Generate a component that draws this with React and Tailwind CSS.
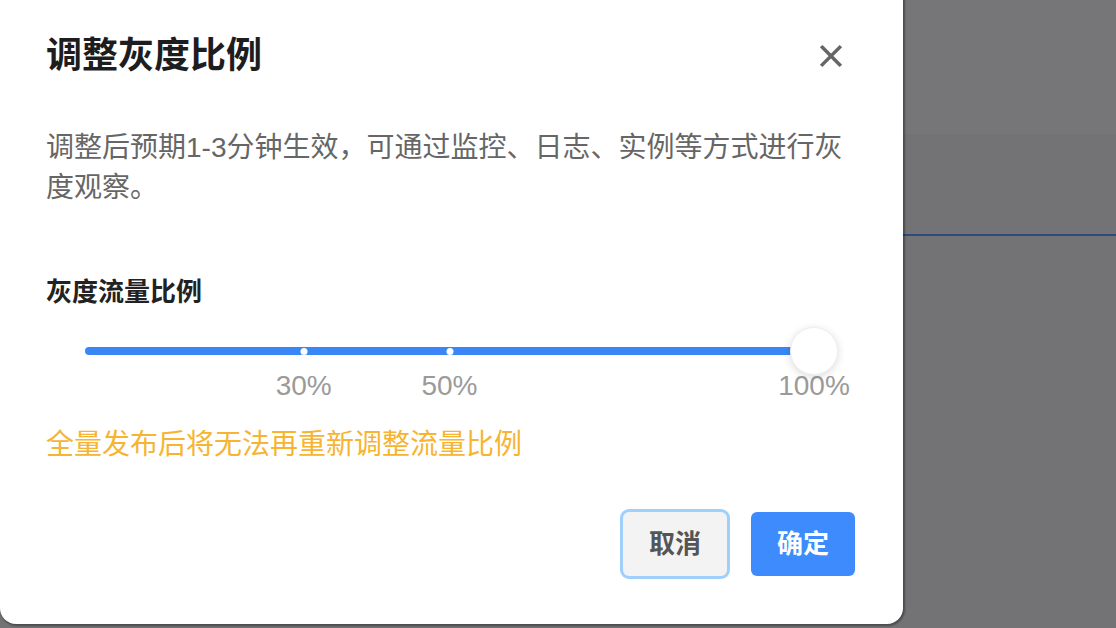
import React from 'react';

const font = { fontFamily: '"Liberation Sans", "Noto Sans CJK SC", sans-serif' };

const marks = [
  { value: 30, label: '30%' },
  { value: 50, label: '50%' },
];

const GraySlider = ({ value }) => (
  <div className="relative h-[84px] pl-[39px] pr-[41px]">
    <div className="relative h-full">
      {/* track */}
      <div className="absolute left-0 right-0 top-[20px] h-[8px] rounded-full bg-[#3b86f7]"></div>
      {marks.map((m) => (
        <div key={m.value}>
          <div
            className="absolute top-[21px] h-[7px] w-[7px] -translate-x-1/2 rounded-full bg-white"
            style={{ left: `${m.value}%` }}
          ></div>
          <div
            className="absolute top-[44px] -translate-x-1/2 text-[28px] leading-[30px] text-[#9a9a9a]"
            style={{ left: `${m.value}%` }}
          >
            {m.label}
          </div>
        </div>
      ))}
      <div className="absolute left-full top-[44px] -translate-x-1/2 text-[28px] leading-[30px] text-[#9a9a9a]">
        100%
      </div>
      {/* thumb */}
      <div
        className="absolute top-0 h-[48px] w-[48px] -translate-x-1/2 rounded-full border border-[#efefef] bg-white shadow-[0_2px_8px_rgba(0,0,0,0.14)]"
        style={{ left: `${value}%` }}
      ></div>
    </div>
  </div>
);

export default function App() {
  return (
    <div className="relative h-[628px] w-[1116px] overflow-hidden bg-[#737375]" style={font}>
      {/* page behind the mask */}
      <div className="h-[134px] bg-[#767678]"></div>
      <div className="h-[100px]"></div>
      <div className="ml-[903px] h-[2px] bg-[#2c4a80]"></div>

      {/* dialog */}
      <div className="absolute left-0 top-[-16px] flex w-[903px] flex-col rounded-2xl bg-white pl-[46px] pr-[48px] pt-[48px] pb-[48px] shadow-[1px_1px_2px_1px_rgba(0,0,0,0.35)]">
        <div className="flex h-[48px] items-center justify-between">
          <h1 className="text-[36px] font-bold leading-[48px] text-[#1d1d1f]">调整灰度比例</h1>
          <button className="mr-[11px] text-[#666]">
            <svg width="26" height="26" viewBox="0 0 24 24" fill="none" stroke="currentColor" strokeWidth="3.2" strokeLinecap="square">
              <path d="M4 4L20 20M20 4L4 20" />
            </svg>
          </button>
        </div>

        <p className="mt-[48px] text-[28px] leading-[40px] text-[#666]">
          调整后预期1-3分钟生效，可通过监控、日志、实例等方式进行灰度观察。
        </p>

        <div className="mt-[66px] text-[26px] font-bold leading-[36px] text-[#222]">灰度流量比例</div>

        <div className="mt-[17px]">
          <GraySlider value={100} />
        </div>

        <p className="mt-[14px] text-[28px] leading-[40px] text-[#f6b432]">全量发布后将无法再重新调整流量比例</p>

        <div className="mt-[47px] flex justify-end gap-[24px]">
          <button className="h-[64px] w-[104px] rounded-md bg-[#f3f3f3] text-[26px] font-bold text-[#555] ring-[3px] ring-[#9fd0fb]">
            取消
          </button>
          <button className="h-[64px] w-[104px] rounded-md bg-[#3d8bfd] text-[26px] font-bold text-white">
            确定
          </button>
        </div>
      </div>
    </div>
  );
}
